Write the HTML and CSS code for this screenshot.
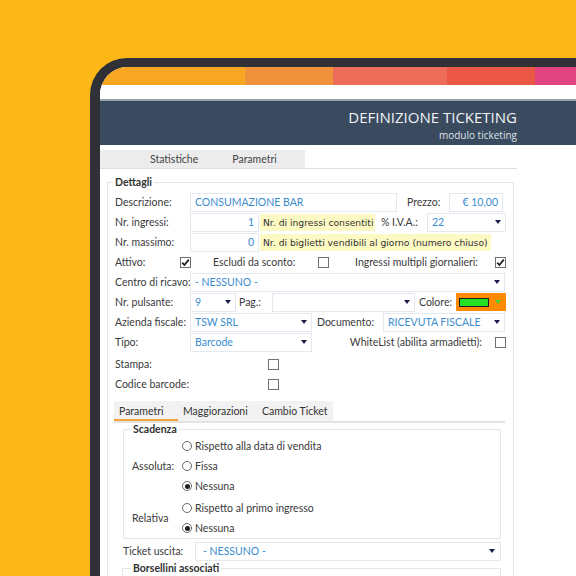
FILE: index.html
```html
<!DOCTYPE html>
<html>
<head>
<meta charset="utf-8">
<title>Definizione ticketing</title>
<link rel="stylesheet" href="styles.css">
</head>
<body>
<div class="device">
  <div class="strip"><i class="c1"></i><i class="c2"></i><i class="c3"></i><i class="c4"></i><i class="c5"></i></div>
  <div class="band"></div>
  <div class="header">
    <div class="header-inner">
      <div class="title">DEFINIZIONE TICKETING</div>
      <div class="subtitle">modulo ticketing</div>
    </div>
  </div>
  <div class="content">
    <div class="toptabs">
      <div class="toptabs-bg"><span>Statistiche</span><span>Parametri</span></div>
    </div>
    <fieldset class="box main">
      <legend>Dettagli</legend>
      <div class="row">
        <span class="lbl">Descrizione:</span>
        <span class="inp w-desc">CONSUMAZIONE BAR</span>
        <span class="lbl2 w-prezzo">Prezzo:</span>
        <span class="inp w-price right">€ 10,00</span>
      </div>
      <div class="row">
        <span class="lbl">Nr. ingressi:</span>
        <span class="inp w-num right">1</span>
        <span class="note w-note1">Nr. di ingressi consentiti</span>
        <span class="lbl2 w-iva">% I.V.A.:</span>
        <span class="sel w-ivasel">22<i class="arr"></i></span>
      </div>
      <div class="row">
        <span class="lbl">Nr. massimo:</span>
        <span class="inp w-num right">0</span>
        <span class="note">Nr. di biglietti vendibili al giorno (numero chiuso)</span>
      </div>
      <div class="row">
        <span class="lbl w-attivo">Attivo:</span>
        <span class="cb on"><svg viewBox="0 0 11 11" width="11" height="11"><path d="M2.2 5.6 L4.4 8 L8.8 2.6" fill="none" stroke="#1d1d1d" stroke-width="1.7"/></svg></span>
        <span class="lbl2 w-escl">Escludi da sconto:</span>
        <span class="cb"></span>
        <span class="spacer"></span>
        <span class="lbl2">Ingressi multipli giornalieri:</span>
        <span class="cb on end17"><svg viewBox="0 0 11 11" width="11" height="11"><path d="M2.2 5.6 L4.4 8 L8.8 2.6" fill="none" stroke="#1d1d1d" stroke-width="1.7"/></svg></span>
      </div>
      <div class="row">
        <span class="lbl">Centro di ricavo:</span>
        <span class="sel w-full">- NESSUNO -<i class="arr"></i></span>
      </div>
      <div class="row">
        <span class="lbl">Nr. pulsante:</span>
        <span class="sel w-puls">9<i class="arr"></i></span>
        <span class="lbl2 w-pag">Pag.:</span>
        <span class="sel w-pagsel"><i class="arr"></i></span>
        <span class="lbl2 w-col">Colore:</span>
        <span class="colorbox"><span class="swatch"></span><i class="arr green"></i></span>
      </div>
      <div class="row">
        <span class="lbl">Azienda fiscale:</span>
        <span class="sel w-half">TSW SRL<i class="arr"></i></span>
        <span class="lbl2 w-doc">Documento:</span>
        <span class="sel w-half">RICEVUTA FISCALE<i class="arr"></i></span>
      </div>
      <div class="row">
        <span class="lbl">Tipo:</span>
        <span class="sel w-half">Barcode<i class="arr"></i></span>
        <span class="spacer"></span>
        <span class="lbl2">WhiteList (abilita armadietti):</span>
        <span class="cb end13"></span>
      </div>
      <div class="row gap">
        <span class="lbl w-long">Stampa:</span>
        <span class="cb"></span>
      </div>
      <div class="row">
        <span class="lbl w-long">Codice barcode:</span>
        <span class="cb"></span>
      </div>

      <div class="subtabs">
        <span class="stab active">Parametri</span>
        <span class="stab">Maggiorazioni</span>
        <span class="stab">Cambio Ticket</span>
      </div>

      <fieldset class="box inner">
        <legend>Scadenza</legend>
        <div class="grp">
          <span class="glbl">Assoluta:</span>
          <div class="opts">
            <div class="opt"><span class="rd"></span>Rispetto alla data di vendita</div>
            <div class="opt"><span class="rd"></span>Fissa</div>
            <div class="opt"><span class="rd on"></span>Nessuna</div>
          </div>
        </div>
        <div class="grp g2">
          <span class="glbl">Relativa</span>
          <div class="opts">
            <div class="opt"><span class="rd"></span>Rispetto al primo ingresso</div>
            <div class="opt"><span class="rd on"></span>Nessuna</div>
          </div>
        </div>
      </fieldset>

      <div class="row ticket">
        <span class="lbl w-tick">Ticket uscita:</span>
        <span class="sel w-ticksel">- NESSUNO -<i class="arr"></i></span>
      </div>

      <fieldset class="box inner2">
        <legend>Borsellini associati</legend>
        <div class="empty"></div>
      </fieldset>
    </fieldset>
  </div>
</div>
</body>
</html>
```

FILE: styles.css
```css
* { box-sizing: border-box; }
html, body { margin: 0; height: 100%; }
body {
  background: #fdb817;
  overflow: hidden;
  font-family: Lato, "Open Sans", sans-serif;
  color: #3a3a3a;
}
.device {
  margin: 58px 0 0 90px;
  width: 540px;
  height: 560px;
  border-top: 9px solid #2f3136;
  border-left: 10px solid #2f3136;
  border-radius: 37px 0 0 0;
  background: #fff;
  overflow: hidden;
}
.strip { display: flex; height: 18px; }
.strip i { display: block; height: 100%; }
.c1 { width: 145px; background: #f9a623; }
.c2 { width: 88px; background: #f0913b; }
.c3 { width: 114px; background: #ee6d5a; }
.c4 { width: 88px; background: #eb5745; }
.c5 { flex: 1; background: #e1457f; }
.band { height: 16px; background: #fff; border-bottom: 2px solid #98a2ae; }
.header { height: 44px; background: #3a4a5f; }
.header-inner { width: 417px; text-align: right; padding-top: 6px; color: #f1f3f5; font-family: "Open Sans", sans-serif; }
.title { font-size: 15px; line-height: 20px; }
.subtitle { font-size: 10px; line-height: 14px; margin-top: 1px; color: #dfe3e8; }

.content { width: 417px; }
.toptabs { margin-top: 5px; border-bottom: 1px solid #dedede; }
.toptabs-bg { width: 205px; height: 18px; background: #ececec; display: flex; align-items: center; padding-left: 50px; font-size: 10.5px; color: #444; }
.toptabs-bg span + span { margin-left: 34px; }

.box { border: 1px solid #e6e6e6; margin: 0; min-width: 0; }
.box legend { font-weight: bold; font-size: 10.5px; line-height: 14px; padding: 0 2px; margin-left: -2px; color: #333; }
.main { width: 407px; margin: 6px 0 0 7px; padding: 3px 8px 0 7px; }

.row { display: flex; align-items: center; height: 20px; font-size: 10.5px; }
.row.gap { margin-top: 2px; }
.lbl { width: 75px; flex: none; white-space: nowrap; }
.lbl2 { flex: none; white-space: nowrap; }
.spacer { flex: 1; }
.inp, .sel {
  flex: none;
  height: 19px;
  border: 1px solid #e4e9ef;
  color: #3a8ccf;
  padding: 0 4px;
  line-height: 17px;
  white-space: nowrap;
  overflow: hidden;
}
.right { text-align: right; }
.sel { display: flex; align-items: center; justify-content: space-between; }
.arr {
  display: block; flex: none; width: 0; height: 0;
  border-left: 3.5px solid transparent; border-right: 3.5px solid transparent;
  border-top: 4px solid #1b1f4d; margin-left: auto;
}
.arr.green { border-top-color: #41d33a; }
.w-desc { width: 207px; }
.w-prezzo { margin-left: 10px; width: 42px; }
.w-price { width: 54px; }
.w-num { width: 69px; }
.note {
  flex: none; background: #fdf9c3; color: #333;
  font-family: "DejaVu Sans", sans-serif; font-size: 9.2px;
  line-height: 17px; padding: 0 3px; margin-left: 1px; white-space: nowrap;
}
.w-note1 { width: 115px; overflow: hidden; }
.w-iva { margin-left: 6px; width: 46px; }
.w-ivasel { width: 79px; }
.w-attivo { width: 65px; }
.cb { flex: none; width: 11px; height: 11px; border: 1px solid #707070; background: #fff; display: flex; }
.cb svg { margin: -1px; }
.w-escl { margin-left: 22px; width: 105px; }
.end17 { margin-left: 17px; margin-right: -1px; }
.end13 { margin-left: 13px; margin-right: -1px; }
.w-full { width: 315px; }
.w-puls { width: 46px; }
.w-pag { margin-left: 3px; width: 33px; }
.w-pagsel { width: 143px; }
.w-col { margin-left: 4px; width: 37px; }
.colorbox {
  flex: none; width: 50px; height: 18px; background: #ff8c00;
  display: flex; align-items: center; padding: 0 5px 0 3px; margin-right: -1px;
}
.swatch { width: 30px; height: 9px; background: #25e025; border: 1px solid #1c1c1c; }
.w-half { width: 122px; }
.w-doc { margin-left: 5px; width: 66px; }
.w-long { width: 153px; }

.subtabs { display: flex; margin: 7px 0 0 -1px; border-bottom: 2px solid #e3e3e3; font-size: 10.5px; }
.stab { height: 20px; line-height: 20px; background: #f2f2f2; padding: 0 5px; color: #333; white-space: nowrap; }
.stab:nth-child(1) { width: 64px; }
.stab:nth-child(2) { width: 79px; }
.stab:nth-child(3) { width: 76px; }
.stab.active { box-shadow: inset 0 -2px 0 #f2a33a; }

.inner { width: 378px; margin: -1px 0 0 8px; padding: 0 8px 0 8px; font-size: 10.5px; }
.inner legend { margin-left: -1px; }
.grp { display: flex; align-items: center; }
.g2 { margin-top: 2px; }
.glbl { width: 50px; flex: none; }
.opt { display: flex; align-items: center; height: 20px; }
.rd { width: 10px; height: 10px; border: 1px solid #6a6a6a; border-radius: 50%; margin-right: 3px; display: flex; align-items: center; justify-content: center; }
.rd.on::after { content: ""; width: 5px; height: 5px; border-radius: 50%; background: #1e1e1e; }

.row.ticket { margin: 2px 0 0 8px; width: 378px; }
.w-tick { width: 72px; }
.w-ticksel { width: 306px; padding-left: 7px; padding-right: 5px; }

.inner2 { width: 379px; margin: 0 0 0 7px; padding: 0 8px; }
.inner2 legend { margin-left: 0; }
.empty { height: 40px; }
```
